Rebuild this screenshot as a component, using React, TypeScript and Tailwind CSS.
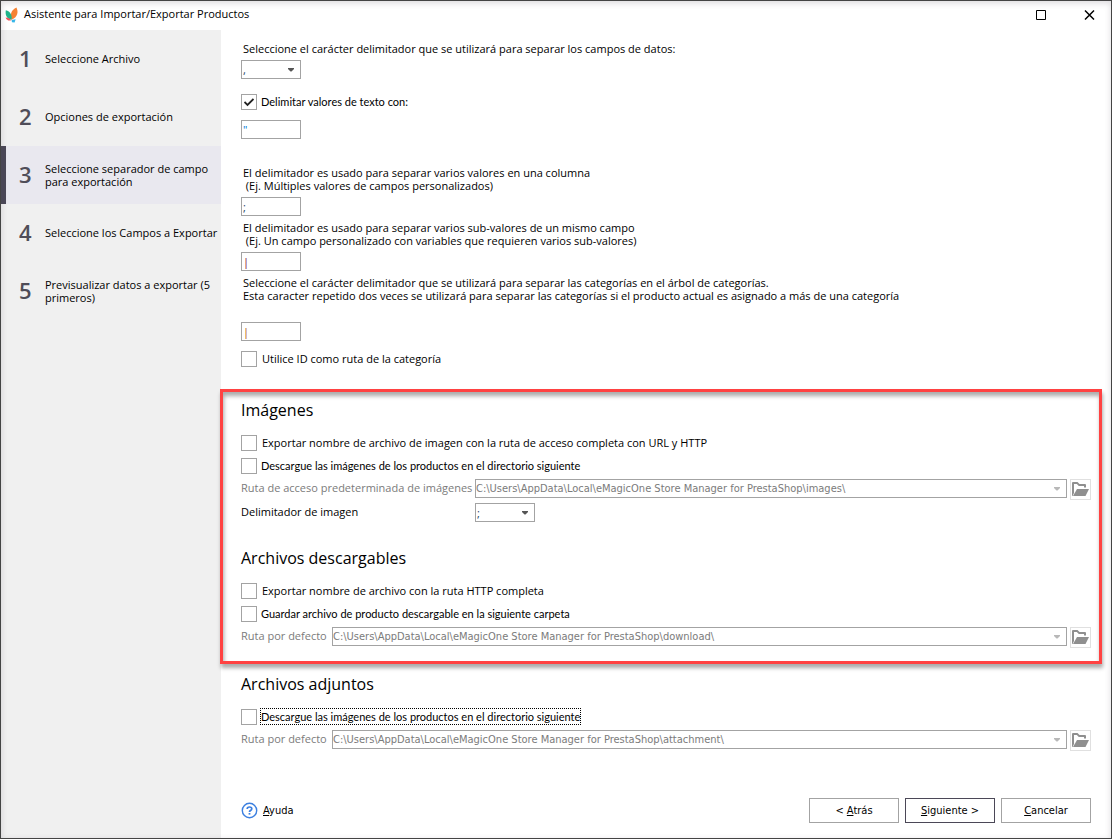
import { useState } from 'react';
import type { ReactNode } from 'react';

const STEPS = [
  'Seleccione Archivo',
  'Opciones de exportación',
  'Seleccione separador de campo para exportación',
  'Seleccione los Campos a Exportar',
  'Previsualizar datos a exportar (5 primeros)',
];

const BASE_PATH = 'C:\\Users\\AppData\\Local\\eMagicOne Store Manager for PrestaShop\\';

function Logo() {
  return (
    <svg width="14" height="16" viewBox="0 0 14 16" aria-hidden="true">
      <path d="M11.4 0.4C13.4 4.4 13.2 9.6 6.6 12.8C4.4 7.6 6.4 2.8 11.4 0.4Z" fill="#f58233" />
      <path d="M0.8 3.2C5.4 4.4 7.2 8 6.6 12.8C1.8 11.8 0 8.2 0.8 3.2Z" fill="#1fb38a" />
      <path d="M0.6 10.4C3 10.4 5 11.4 6.2 13.2C3.8 14.2 1.6 13.2 0.6 10.4Z" fill="#f2545b" />
      <path d="M6.6 13L10.6 12.2L9.6 15.6L7 15.2Z" fill="#37b6e8" />
    </svg>
  );
}

function FolderIcon() {
  return (
    <svg width="17" height="15" viewBox="0 0 17 15" aria-hidden="true">
      <path d="M0 1Q0 0 1 0H5.5L7.5 2H13Q14 2 14 3V5.5H12V4H6.8L4.8 2H2V11L0.5 14H0Z" fill="#8f8f8f" />
      <path d="M5 7H17L13.5 14H1Z" fill="#8f8f8f" />
    </svg>
  );
}

function Arrow({ muted = false }: { muted?: boolean }) {
  return (
    <svg
      className={`absolute right-[7px] top-[8px] pointer-events-none ${muted ? 'text-[#b8b8b8]' : 'text-[#555]'}`}
      width="6"
      height="4"
      viewBox="0 0 6 4"
      aria-hidden="true"
    >
      <path d="M0 0H6V1L3.5 3.5H2.5L0 1Z" fill="currentColor" />
    </svg>
  );
}

type CheckProps = {
  id: string;
  label: string;
  compact?: boolean;
  focused?: boolean;
  defaultChecked?: boolean;
};

function Check({ id, label, compact = false, focused = false, defaultChecked = false }: CheckProps) {
  const [checked, setChecked] = useState(defaultChecked);

  return (
    <div className={`flex items-start h-[16px] leading-[15px] ${compact ? "gap-[4px] font-['Lato',sans-serif]" : 'gap-[5px]'}`}>
      <span className="relative block size-[16px] shrink-0">
        <input
          id={id}
          type="checkbox"
          checked={checked}
          onChange={(e) => setChecked(e.target.checked)}
          className="block size-[16px] appearance-none border border-[#a3a3a3] bg-white"
        />
        {checked && (
          <svg className="absolute left-[3px] top-[4px] pointer-events-none" width="10" height="9" viewBox="0 0 10 9" aria-hidden="true">
            <path d="M0.5 4L3.5 7L9.5 1" fill="none" stroke="#222" strokeWidth="1.8" />
          </svg>
        )}
      </span>
      <label htmlFor={id} className={`whitespace-nowrap ${focused ? 'outline-1 outline-dotted outline-black' : ''}`}>
        {label}
      </label>
    </div>
  );
}

function SmallInput({ id, value, tone = 'text-[#1d3f66]' }: { id: string; value: string; tone?: string }) {
  return (
    <input
      id={id}
      defaultValue={value}
      className={`block w-[60px] h-[19px] px-px border border-[#a3a3a3] bg-white outline-none ${tone}`}
    />
  );
}

function SmallSelect({ id, value }: { id: string; value: string }) {
  return (
    <div className="relative w-[60px]">
      <select id={id} defaultValue={value} className="block w-full h-[19px] px-px appearance-none border border-[#a3a3a3] bg-white text-[#1d3f66] outline-none">
        <option>,</option>
        <option>;</option>
        <option>|</option>
      </select>
      <Arrow />
    </div>
  );
}

function PathRow({ id, label, path, wide = false }: { id: string; label: string; path: string; wide?: boolean }) {
  return (
    <div className="mt-[5px] flex items-start text-[#7b7b7b]">
      <label htmlFor={id} className={`shrink-0 whitespace-nowrap leading-[17px] ${wide ? 'w-[234px]' : 'w-[91px]'}`}>
        {label}
      </label>
      <div className="relative flex-1">
        <select
          id={id}
          disabled
          className="block w-full h-[19px] appearance-none border border-[#a3a3a3] bg-white font-['DejaVu_Sans_Condensed',sans-serif] text-[#7b7b7b] opacity-100"
        >
          <option>{BASE_PATH + path}</option>
        </select>
        <Arrow muted />
      </div>
      <button aria-label="Examinar" className="ml-[3px] size-[21px] flex items-center justify-center border border-[#e0e0e0] bg-white">
        <FolderIcon />
      </button>
    </div>
  );
}

function Heading({ children }: { children: ReactNode }) {
  return <h2 className="mb-[13px] text-[16px] leading-[24px]">{children}</h2>;
}

export default function App() {
  return (
    <div className="relative min-h-screen flex flex-col border border-[#444] bg-white font-['Open_Sans','Noto_Sans',sans-serif] text-[11px] leading-[13px] text-black">
      <header className="h-[29px] pb-[2px] flex items-center pl-[4px] pr-[16px]">
        <Logo />
        <h1 className="ml-[5px] flex-1 pb-[2px] text-[11px] leading-[16px]">Asistente para Importar/Exportar Productos</h1>
        <button aria-label="Maximizar" className="mr-[37px]">
          <svg className="block" width="11" height="11" viewBox="0 0 11 11">
            <path d="M0.5 1.5H9.5V10.5H0.5Z" fill="none" stroke="#000" />
          </svg>
        </button>
        <button aria-label="Cerrar">
          <svg className="block" width="11" height="11" viewBox="0 0 11 11">
            <path d="M1 1.5L10 10.5M10 1.5L1 10.5" stroke="#000" strokeWidth="1.5" />
          </svg>
        </button>
      </header>

      <div className="flex-1 flex">
        <nav className="w-[220px] shrink-0 bg-[#f0f0f0]">
          <ol>
            {STEPS.map((step, i) => (
              <li
                key={step}
                aria-current={i === 2 ? 'step' : undefined}
                className={`h-[58px] pb-px flex items-center border-l-[5px] ${i === 2 ? 'border-[#4b4857] bg-[#e9e8ef]' : 'border-transparent'}`}
              >
                <span className="w-[39px] pl-[13px] pb-px text-[22px] leading-[28px] font-semibold text-[#4f4d58]">{i + 1}</span>
                <span className="flex-1">{step}</span>
              </li>
            ))}
          </ol>
        </nav>

        <main className="flex-1 min-w-0 flex flex-col pt-[12px] pb-[15px]">
          <div className="px-[20px]">
            <label htmlFor="field-sep" className="block px-[2px] mb-[5px]">
              Seleccione el carácter delimitador que se utilizará para separar los campos de datos:
            </label>
            <SmallSelect id="field-sep" value="," />
            <div className="mt-[15px] mb-[10px]">
              <Check id="quote-text" label="Delimitar valores de texto con:" compact defaultChecked />
            </div>
            <SmallInput id="quote-char" value={'"'} tone="text-[#0078d7]" />

            <label htmlFor="multi-sep" className="block px-[2px] mt-[27px] mb-[5px]">
              El delimitador es usado para separar varios valores en una columna
              <br />
              &nbsp;(Ej. Múltiples valores de campos personalizados)
            </label>
            <SmallInput id="multi-sep" value=";" />

            <label htmlFor="sub-sep" className="block px-[2px] mt-[5px] mb-[5px]">
              El delimitador es usado para separar varios sub-valores de un mismo campo
              <br />
              &nbsp;(Ej. Un campo personalizado con variables que requieren varios sub-valores)
            </label>
            <SmallInput id="sub-sep" value="|" tone="text-[#7a0030]" />

            <label htmlFor="cat-sep" className="block px-[2px] mt-[5px] mb-[20px]">
              Seleccione el carácter delimitador que se utilizará para separar las categorías en el árbol de categorías.
              <br />
              Esta caracter repetido dos veces se utilizará para separar las categorías si el producto actual es asignado a más de una categoría
            </label>
            <SmallInput id="cat-sep" value="|" tone="text-[#b05000]" />
            <div className="mt-[10px]">
              <Check id="cat-id" label="Utilice ID como ruta de la categoría" />
            </div>
          </div>

          <div className="relative -ml-px mr-[9px] mt-[22px] border-[3px] border-[#ff4242] pt-[6px] pb-[13px] pl-[18px] pr-[8px] shadow-[1px_4px_4px_#00000055,inset_1px_4px_4px_#00000055]">
            <section>
              <Heading>Imágenes</Heading>
              <div className="flex flex-col gap-[7px]">
                <Check id="img-url" label="Exportar nombre de archivo de imagen con la ruta de acceso completa con URL y HTTP" />
                <Check id="img-download" label="Descargue las imágenes de los productos en el directorio siguiente" compact />
              </div>
              <PathRow id="img-path" label="Ruta de acceso predeterminada de imágenes" path={'images\\'} wide />
              <div className="mt-[3px] flex items-start">
                <label htmlFor="img-sep" className="w-[234px] leading-[17px]">Delimitador de imagen</label>
                <SmallSelect id="img-sep" value=";" />
              </div>
            </section>

            <section className="mt-[24px]">
              <Heading>Archivos descargables</Heading>
              <div className="flex flex-col gap-[7px]">
                <Check id="file-url" label="Exportar nombre de archivo con la ruta HTTP completa" />
                <Check id="file-save" label="Guardar archivo de producto descargable en la siguiente carpeta" compact />
              </div>
              <PathRow id="file-path" label="Ruta por defecto" path={'download\\'} />
            </section>
          </div>

          <section className="mt-[8px] px-[20px]">
            <Heading>Archivos adjuntos</Heading>
            <Check id="att-download" label="Descargue las imágenes de los productos en el directorio siguiente" compact focused />
            <PathRow id="att-path" label="Ruta por defecto" path={'attachment\\'} />
          </section>

          <footer className="mt-auto px-[20px] flex items-center gap-[6px] font-['DejaVu_Sans_Condensed',sans-serif]">
            <a href="#ayuda" className="mr-auto flex items-center gap-[5px]">
              <svg width="17" height="17" viewBox="0 0 17 17" aria-hidden="true">
                <circle cx="8.5" cy="8.5" r="7.2" fill="none" stroke="#3b7fe0" strokeWidth="1.4" />
                <path d="M6.2 7Q6.2 5 8.5 5T10.8 6.8Q10.8 8 9.4 8.6Q8.5 9 8.5 10" fill="none" stroke="#3b7fe0" strokeWidth="1.7" />
                <path d="M7.6 11H9.4V12.6H7.6Z" fill="#3b7fe0" />
              </svg>
              <span><u>A</u>yuda</span>
            </a>
            <button className="w-[90px] h-[25px] border border-[#a3a3a3] bg-white">&lt; <u>A</u>trás</button>
            <button className="w-[90px] h-[25px] border border-[#4b4857] bg-white"><u>S</u>iguiente &gt;</button>
            <button className="w-[90px] h-[25px] border border-[#a3a3a3] bg-white"><u>C</u>ancelar</button>
          </footer>
        </main>
      </div>

      <div className="absolute inset-0 pointer-events-none shadow-[inset_0_2px_6px_#4b405033]" />
    </div>
  );
}
